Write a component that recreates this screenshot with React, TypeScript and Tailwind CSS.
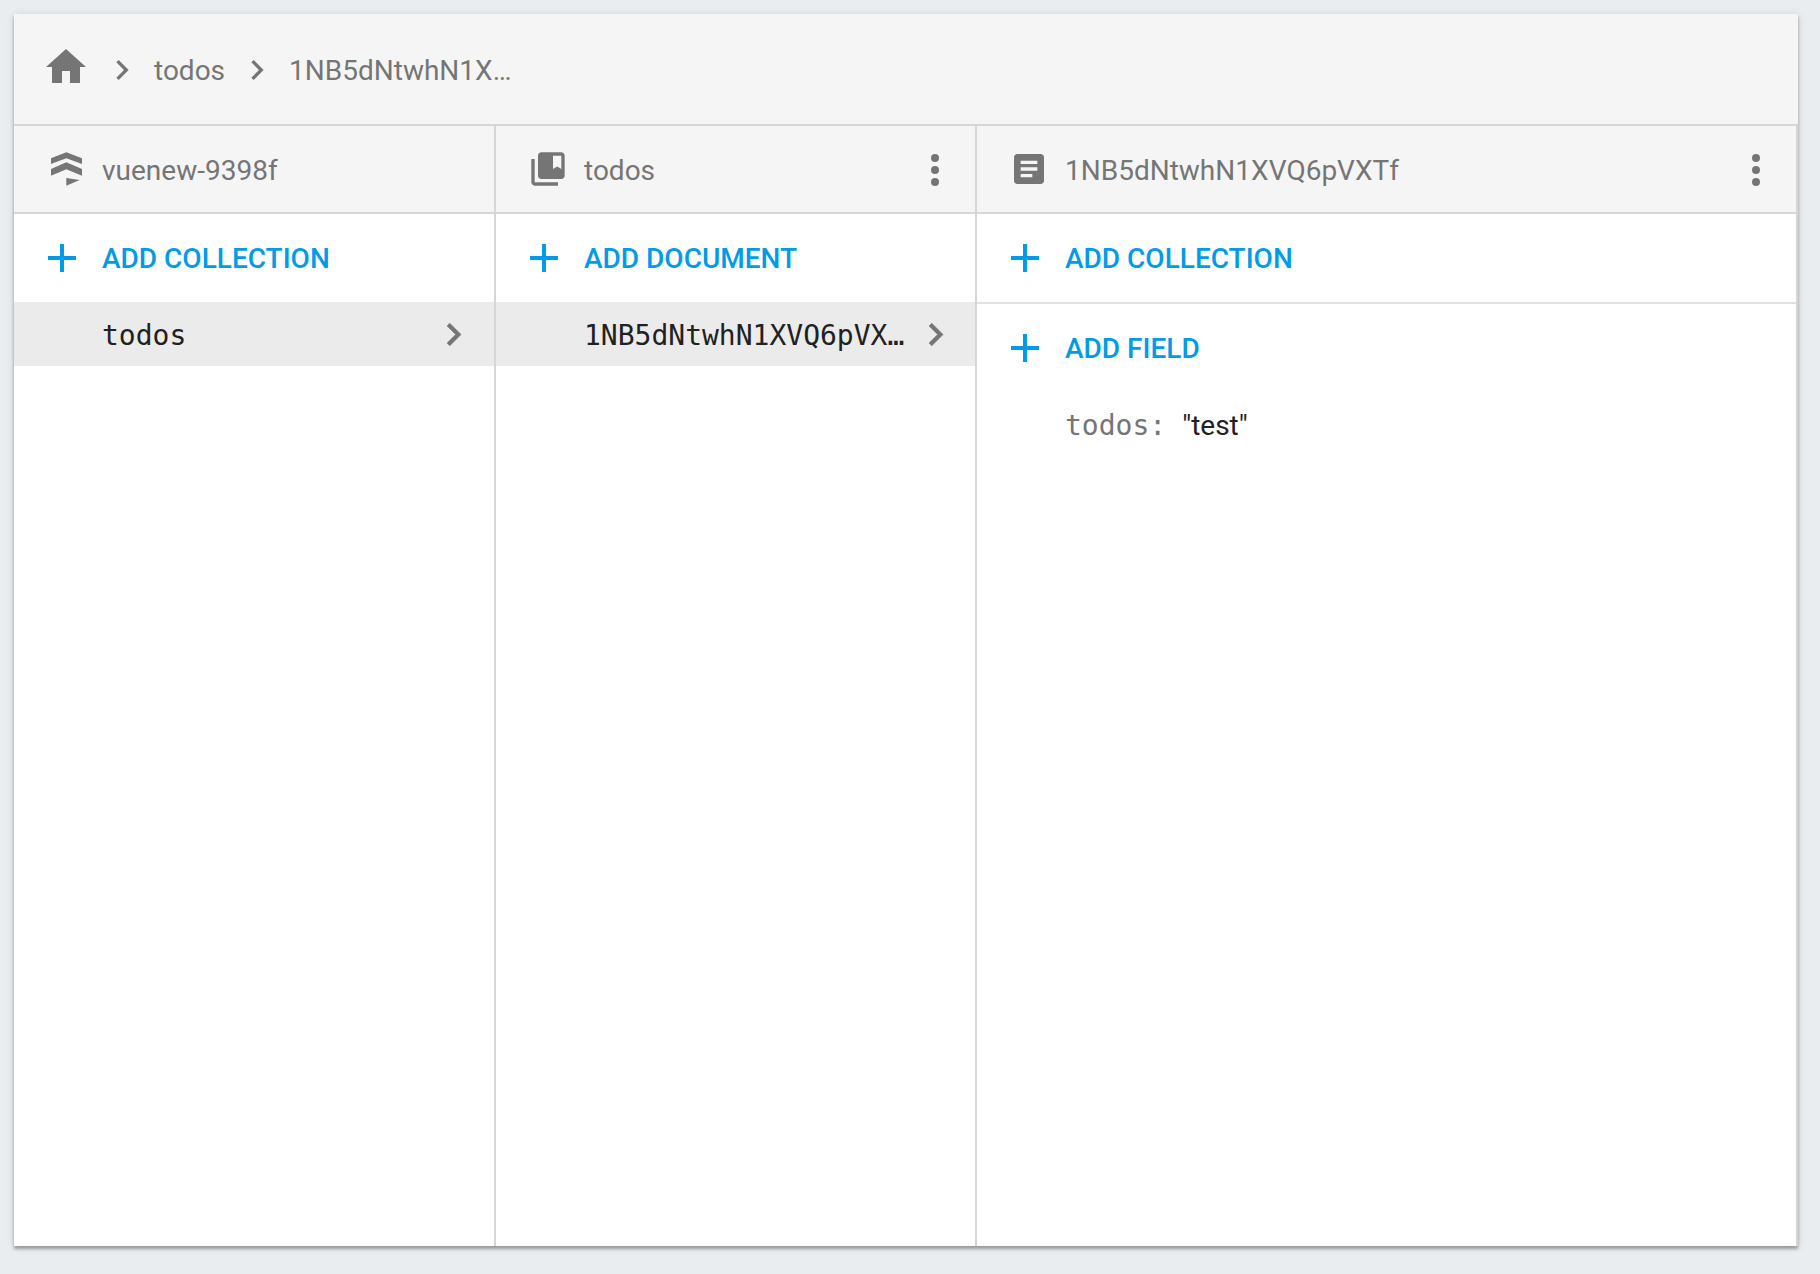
import type { ReactNode } from 'react';

const sans = "font-['Roboto',sans-serif]";
const mono = "font-['DejaVu_Sans_Mono',monospace]";

function MdIcon({ d, className, bold }: { d: string; className: string; bold?: boolean }) {
  return (
    <svg
      viewBox="0 0 24 24"
      fill="currentColor"
      stroke={bold ? 'currentColor' : 'none'}
      strokeWidth={bold ? 0.35 : 0}
      className={`shrink-0 ${className}`}
    >
      <path d={d} />
    </svg>
  );
}

const HOME = 'M10 20v-6h4v6h5v-8h3L12 3 2 12h3v8z';
const CHEVRON = 'M10 6L8.59 7.41 13.17 12l-4.58 4.59L10 18l6-6z';
const COLLECTION =
  'M4 6H2v14c0 1.1.9 2 2 2h14v-2H4V6zm16-4H8c-1.1 0-2 .9-2 2v12c0 1.1.9 2 2 2h12c1.1 0 2-.9 2-2V4c0-1.1-.9-2-2-2zm0 10l-2.5-1.5L15 12V4h5v8z';
const DOCUMENT =
  'M19 3H5c-1.1 0-2 .9-2 2v14c0 1.1.9 2 2 2h14c1.1 0 2-.9 2-2V5c0-1.1-.9-2-2-2zm-5 14H7v-2h7v2zm3-4H7v-2h10v2zm0-4H7V7h10v2z';

function StackIcon() {
  return (
    <svg viewBox="62 370 93 100" fill="currentColor" className="h-[34px] w-[31px] shrink-0">
      <path d="M108 370L155 388V405L108 388L62 405V388Z" />
      <path d="M108 400L155 420V440L108 421L62 440V420Z" />
      <path d="M108 447L148 453L108 470Z" />
    </svg>
  );
}

function PlusIcon() {
  return (
    <svg viewBox="0 0 28 28" fill="currentColor" className="h-7 w-7 shrink-0">
      <path d="M12 0h4v12h12v4H16v12h-4V16H0v-4h12z" />
    </svg>
  );
}

function MoreIcon() {
  return (
    <svg viewBox="0 0 8 32" fill="currentColor" className="h-8 w-2 shrink-0">
      <circle cx="4" cy="4" r="4" />
      <circle cx="4" cy="16" r="4" />
      <circle cx="4" cy="28" r="4" />
    </svg>
  );
}

function ColumnHeader({ icon, title, pad, more }: { icon: ReactNode; title: string; pad: string; more?: string }) {
  return (
    <div className={`flex h-[88px] shrink-0 items-center border-b-2 border-[#d6d6d6] bg-[#f5f5f5] text-[#757575] ${pad}`}>
      {icon}
      <span className="flex-1 pt-[3px] text-[28px] leading-none">{title}</span>
      {more && (
        <span className={more}>
          <MoreIcon />
        </span>
      )}
    </div>
  );
}

function AddRow({ label, pad, className = '' }: { label: string; pad: string; className?: string }) {
  return (
    <div className={`flex shrink-0 items-center text-[#039be5] ${pad} ${className}`}>
      <PlusIcon />
      <span className="ml-[26px] pt-0.5 text-[28px] font-medium leading-none">{label}</span>
    </div>
  );
}

function SelectedRow({ label, width, chevron }: { label: string; width: string; chevron: string }) {
  return (
    <div className="flex h-16 shrink-0 items-center bg-[#ebebeb] pl-[88px]">
      <span className={`truncate pt-[3px] text-[28px] leading-normal text-[#212121] ${mono} ${width}`}>{label}</span>
      <MdIcon d={CHEVRON} bold className={`h-[45px] w-[45px] text-[#757575] ${chevron}`} />
    </div>
  );
}

export default function App() {
  return (
    <div className={`h-[1274px] bg-[#e9edf0] pl-[14px] pt-[14px] ${sans}`}>
      <div className="flex h-[1232px] w-[1784px] flex-col bg-white shadow-[0_3px_3px_rgba(0,0,0,0.3),0_1px_8px_rgba(0,0,0,0.12)]">
        <div className="flex h-[112px] shrink-0 items-center border-b-2 border-[#d6d6d6] bg-[#f5f5f5] pl-7 text-[#757575]">
          <MdIcon d={HOME} className="mb-1 h-12 w-12" />
          <MdIcon d={CHEVRON} className="ml-3 mt-0.5 h-10 w-10" />
          <span className="ml-3 pt-[3px] text-[28px] leading-none">todos</span>
          <MdIcon d={CHEVRON} className="ml-3 mt-0.5 h-10 w-10" />
          <span className="ml-3 w-[234px] truncate pt-[3px] text-[28px] leading-normal">1NB5dNtwhN1XVQ6pVXTf</span>
        </div>

        <div className="flex min-h-0 flex-1">
          <div className="flex w-[482px] shrink-0 flex-col border-r-2 border-[#d6d6d6]">
            <ColumnHeader
              icon={<span className="mr-5 text-[#757575]"><StackIcon /></span>}
              title="vuenew-9398f"
              pad="pl-[37px]"
            />
            <AddRow label="ADD COLLECTION" pad="h-[88px] pl-[34px]" />
            <SelectedRow label="todos" width="w-[329px]" chevron="" />
          </div>

          <div className="flex w-[481px] shrink-0 flex-col border-r-2 border-[#d6d6d6]">
            <ColumnHeader
              icon={<MdIcon d={COLLECTION} className="-ml-px mr-4 h-10 w-10" />}
              title="todos"
              pad="pl-[33px]"
              more="mr-[36px] mt-0.5"
            />
            <AddRow label="ADD DOCUMENT" pad="h-[88px] pl-[34px]" />
            <SelectedRow label="1NB5dNtwhN1XVQ6pVXTf" width="w-[322px]" chevron="ml-[7px]" />
          </div>

          <div className="flex min-w-0 flex-1 flex-col border-r-2 border-[#d6d6d6]">
            <ColumnHeader
              icon={<MdIcon d={DOCUMENT} className="-ml-px mr-4 h-10 w-10" />}
              title="1NB5dNtwhN1XVQ6pVXTf"
              pad="pl-[33px]"
              more="mr-[36px] mt-0.5"
            />
            <AddRow label="ADD COLLECTION" pad="h-[90px] pl-[34px] border-b-2 border-[#e0e0e0]" />
            <AddRow label="ADD FIELD" pad="pl-[34px]" className="mt-[29px]" />
            <div className="mt-[42px] flex items-baseline pl-[88px] text-[28px] leading-normal">
              <span className={`text-[#757575] ${mono}`}>todos:</span>
              <span className="ml-4 text-[#212121]">"test"</span>
            </div>
          </div>
        </div>
      </div>
    </div>
  );
}
